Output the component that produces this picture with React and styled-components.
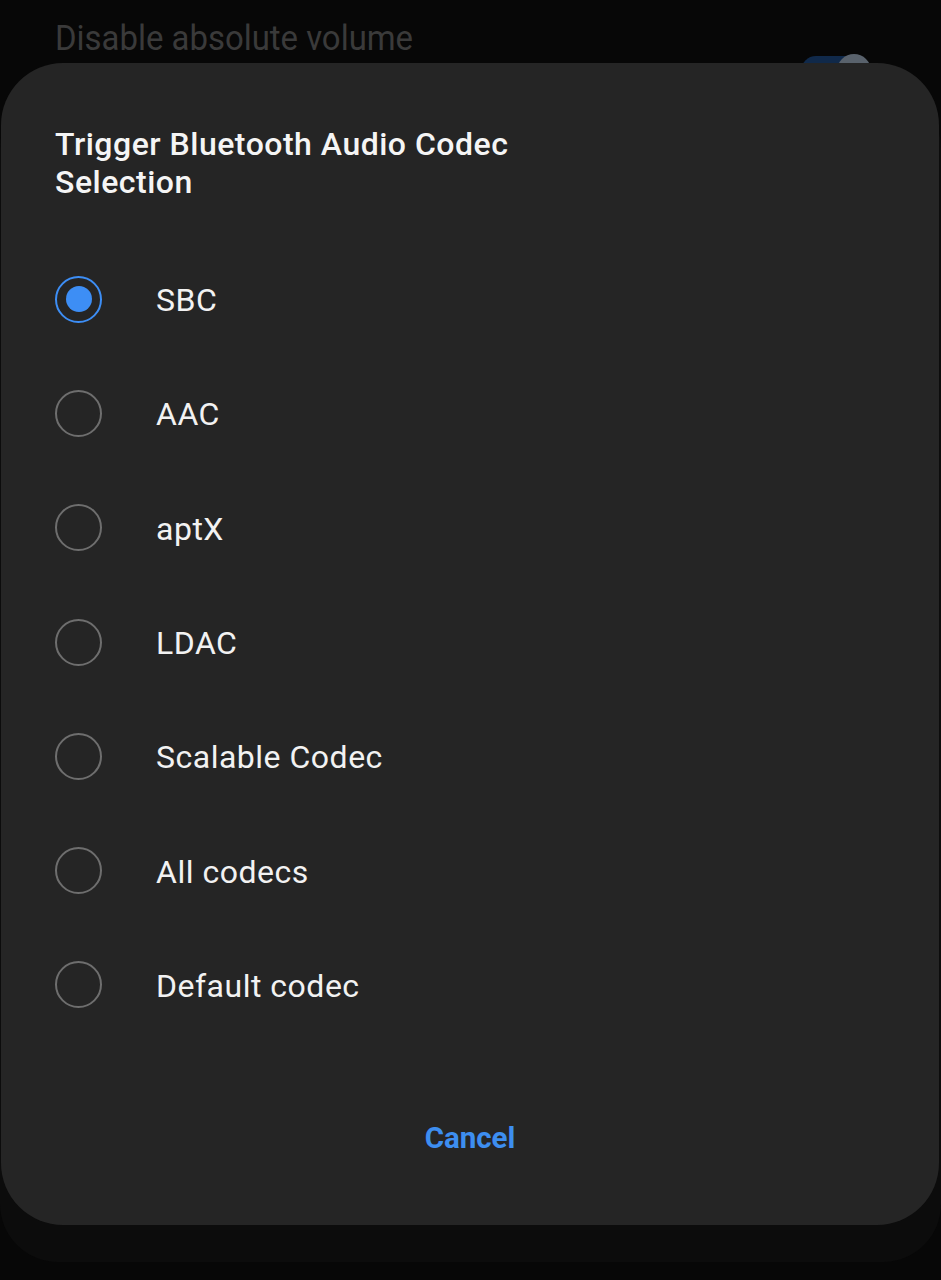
import React from 'react';
import styled, { createGlobalStyle } from 'styled-components';

const codecs = ['SBC', 'AAC', 'aptX', 'LDAC', 'Scalable Codec', 'All codecs', 'Default codec'];

const GlobalStyle = createGlobalStyle`
  html, body {
    margin: 0;
    padding: 0;
    background: #070707;
  }
  body {
    font-family: Roboto, "Noto Sans", sans-serif;
  }
`;

const Screen = styled.div`
  position: relative;
  width: 941px;
  height: 1280px;
  overflow: hidden;
  background: #070707;
`;

const SettingRow = styled.div`
  display: flex;
  align-items: flex-start;
  justify-content: space-between;
  padding: 16px 70px 0 55px;
`;

const SettingText = styled.div`
  font-size: 35px;
  line-height: 46px;
  color: #3a3a3a;
  transform: scaleX(0.94);
  transform-origin: left center;
  white-space: nowrap;
`;

const Toggle = styled.div`
  position: relative;
  margin-top: 40px;
  width: 70px;
  height: 30px;
  border-radius: 15px;
  background: #10294a;
`;

const Thumb = styled.div`
  position: absolute;
  right: 0;
  top: -2px;
  width: 34px;
  height: 34px;
  border-radius: 50%;
  background: #59626c;
`;

const Shadow = styled.div`
  position: absolute;
  top: 90px;
  left: 0;
  right: 0;
  height: 1172px;
  border-radius: 58px;
  background: #0c0c0c;
`;

const Dialog = styled.div`
  position: absolute;
  top: 63px;
  left: 1px;
  width: 938px;
  height: 1162px;
  box-sizing: border-box;
  border-radius: 62px;
  background: #252525;
  padding: 62px 0 0;
  display: flex;
  flex-direction: column;
`;

const Title = styled.h2`
  margin: 0 0 41px;
  padding: 0 54px;
  font-size: 32px;
  line-height: 38px;
  letter-spacing: 0.5px;
  font-weight: 500;
  color: #f5f5f5;
  width: 500px;
`;

const List = styled.div`
  display: flex;
  flex-direction: column;
`;

const Row = styled.div`
  height: 114.3px;
  display: flex;
  align-items: center;
  padding-left: 54px;
`;

const Radio = styled.div`
  width: 47px;
  height: 47px;
  box-sizing: border-box;
  border-radius: 50%;
  border: 2.5px solid ${p => (p.checked ? '#3d8ef5' : '#6e6e6e')};
  display: flex;
  align-items: center;
  justify-content: center;
  flex-shrink: 0;
`;

const Dot = styled.div`
  width: 26px;
  height: 26px;
  border-radius: 50%;
  background: #3d8ef5;
`;

const Label = styled.span`
  margin-left: 54px;
  font-size: 32px;
  letter-spacing: 0.5px;
  color: #f2f2f2;
  margin-top: 2px;
`;

const Footer = styled.div`
  display: flex;
  justify-content: center;
  margin-top: 79px;
`;

const CancelButton = styled.button`
  background: none;
  border: none;
  padding: 0;
  font-family: Roboto, "Noto Sans", sans-serif;
  font-size: 29.5px;
  font-weight: 700;
  color: #3d8ef0;
`;

export default function App() {
  return (
    <>
      <GlobalStyle />
      <Screen>
        <SettingRow>
          <SettingText>Disable absolute volume</SettingText>
          <Toggle>
            <Thumb />
          </Toggle>
        </SettingRow>
        <Shadow />
        <Dialog>
          <Title>Trigger Bluetooth Audio Codec Selection</Title>
          <List>
            {codecs.map((c, i) => (
              <Row key={c}>
                <Radio checked={i === 0}>{i === 0 && <Dot />}</Radio>
                <Label>{c}</Label>
              </Row>
            ))}
          </List>
          <Footer>
            <CancelButton>Cancel</CancelButton>
          </Footer>
        </Dialog>
      </Screen>
    </>
  );
}
